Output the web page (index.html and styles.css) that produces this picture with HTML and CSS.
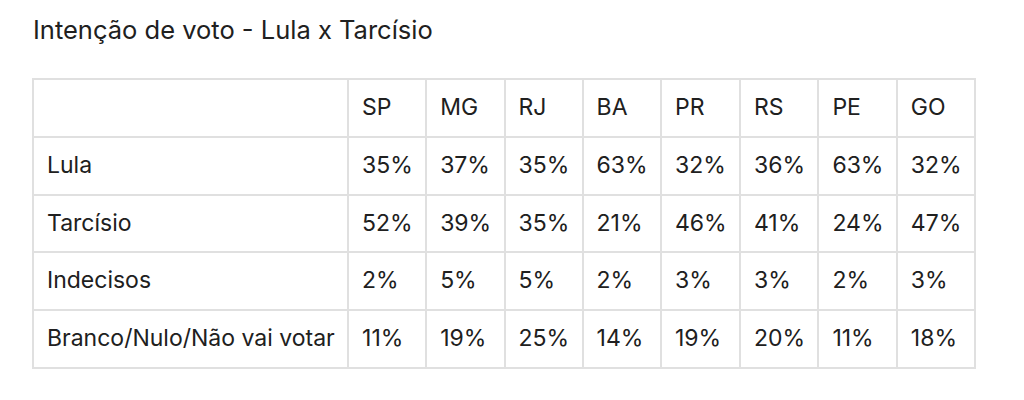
FILE: index.html
```html
<!DOCTYPE html>
<html lang="pt-BR">
<head>
<meta charset="utf-8">
<title>Intenção de voto - Lula x Tarcísio</title>
<link rel="stylesheet" href="styles.css">
</head>
<body>
<div class="page">
  <h1 class="title">Intenção de voto - Lula x Tarcísio</h1>
  <table class="poll">
    <thead>
      <tr><th></th><th>SP</th><th>MG</th><th>RJ</th><th>BA</th><th>PR</th><th>RS</th><th>PE</th><th>GO</th></tr>
    </thead>
    <tbody>
      <tr><td>Lula</td><td>35%</td><td>37%</td><td>35%</td><td>63%</td><td>32%</td><td>36%</td><td>63%</td><td>32%</td></tr>
      <tr><td>Tarcísio</td><td>52%</td><td>39%</td><td>35%</td><td>21%</td><td>46%</td><td>41%</td><td>24%</td><td>47%</td></tr>
      <tr><td>Indecisos</td><td>2%</td><td>5%</td><td>5%</td><td>2%</td><td>3%</td><td>3%</td><td>2%</td><td>3%</td></tr>
      <tr><td>Branco/Nulo/Não vai votar</td><td>11%</td><td>19%</td><td>25%</td><td>14%</td><td>19%</td><td>20%</td><td>11%</td><td>18%</td></tr>
    </tbody>
  </table>
</div>
</body>
</html>
```
FILE: styles.css
```css
html, body {
  margin: 0;
  padding: 0;
  background: #ffffff;
}
.page {
  padding: 14px 32px 0;
  font-family: Inter, "Liberation Sans", sans-serif;
  color: #202020;
}
.title {
  margin: 0 0 32px 1px;
  font-size: 25.5px;
  font-weight: 400;
  line-height: 32px;
}
.poll {
  border-collapse: collapse;
  font-size: 23px;
}
.poll th,
.poll td {
  border: 2px solid #e0e0e0;
  padding: 13px 12.3px 13px 13px;
  line-height: 29.8px;
  text-align: left;
  font-weight: 400;
  white-space: nowrap;
}
```
